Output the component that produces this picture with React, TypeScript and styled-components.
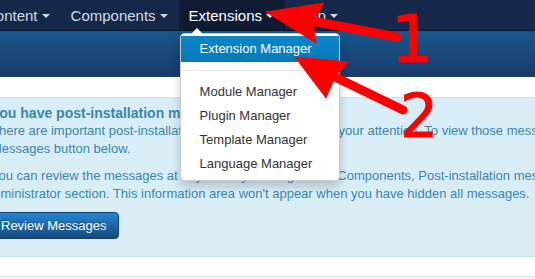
import React from "react";
import styled, { createGlobalStyle } from "styled-components";

const GlobalStyle = createGlobalStyle`
  html, body {
    margin: 0;
    padding: 0;
    background: #fff;
    overflow: hidden;
  }
  body {
    font-family: "Liberation Sans", Arial, sans-serif;
  }
`;

const Page = styled.div`
  position: relative;
  width: 535px;
  height: 279px;
  overflow: hidden;
  background: #fff;
`;

const Navbar = styled.nav`
  position: relative;
  z-index: 3;
  display: flex;
  height: 30px;
  background: #152849;
  border-bottom: 1px solid #0b1629;
`;

const Menu = styled.ul`
  display: flex;
  margin: 0 0 0 -25px;
  padding: 0;
  list-style: none;
`;

const NavItem = styled.li<{ $active?: boolean }>`
  position: relative;
  display: flex;
  align-items: center;
  gap: 4px;
  height: 30px;
  padding: 0 11px 0 10px;
  font-size: 15px;
  white-space: nowrap;
  color: ${(p) => (p.$active ? "#ffffff" : "#d3d8e1")};
  background: ${(p) => (p.$active ? "#0e1b33" : "transparent")};
`;

const Caret = styled.span`
  width: 0;
  height: 0;
  margin-top: 1px;
  border-top: 4px solid currentColor;
  border-left: 4px solid transparent;
  border-right: 4px solid transparent;
`;

const Dropdown = styled.ul`
  position: absolute;
  top: 33px;
  left: 1px;
  width: 158px;
  margin: 0;
  padding: 2px 0 4px;
  list-style: none;
  background: #fff;
  border: 1px solid rgba(0, 0, 0, 0.2);
  border-radius: 5px;
  box-shadow: 0 5px 10px rgba(0, 0, 0, 0.2);

  &::before {
    content: "";
    position: absolute;
    top: -7px;
    left: 9px;
    border-left: 7px solid transparent;
    border-right: 7px solid transparent;
    border-bottom: 7px solid rgba(0, 0, 0, 0.2);
  }
  &::after {
    content: "";
    position: absolute;
    top: -6px;
    left: 10px;
    border-left: 6px solid transparent;
    border-right: 6px solid transparent;
    border-bottom: 6px solid #fff;
  }
`;

const DropItem = styled.li<{ $active?: boolean }>`
  padding: 0 19px;
  font-size: 13px;
  line-height: ${(p) => (p.$active ? "26px" : "24px")};
  color: ${(p) => (p.$active ? "#fff" : "#333")};
  background: ${(p) =>
    p.$active ? "linear-gradient(#0b86c8, #0679b9)" : "transparent"};
`;

const Divider = styled.li`
  height: 1px;
  margin: 8px 1px 9px;
  background: #e5e5e5;
`;

const Header = styled.header`
  height: 46px;
  background: linear-gradient(#17578c, #1a3a6b);
`;

const Content = styled.main`
  padding-top: 20px;
`;

const Alert = styled.section`
  padding: 6px 0 17px;
  background: #d9edf7;
  border-top: 1px solid #bce8f1;
  border-bottom: 1px solid #bce8f1;
  color: #3a87ad;
  font-size: 13px;
  line-height: 18px;
`;

const AlertBody = styled.div`
  margin-left: -9px;
`;

const AlertTitle = styled.h4`
  margin: 0;
  font-size: 14px;
  font-weight: bold;
  line-height: 18px;
  white-space: nowrap;
`;

const Paragraph = styled.p`
  margin: 0 0 9px;
`;

const Line = styled.span<{ $hang?: number }>`
  display: block;
  white-space: nowrap;
  margin-left: ${(p) => (p.$hang ? `-${p.$hang}px` : "0")};
`;

const Button = styled.button`
  height: 27px;
  margin-left: -2px;
  padding: 0 11px 0 11px;
  font-family: inherit;
  font-size: 13px;
  color: #fff;
  text-shadow: 0 -1px 0 rgba(0, 0, 0, 0.25);
  background: linear-gradient(#2586d4, #15497d);
  border: 1px solid #143f6c;
  border-radius: 4px;
`;

const Footer = styled.div`
  height: 10px;
  margin-top: 19px;
  background: #f3f3f3;
  border-top: 1px solid #e1e1e1;
`;

const Annotations = styled.svg`
  position: absolute;
  top: 0;
  left: 0;
  z-index: 10;
  pointer-events: none;
`;

const Digit = styled.text`
  font-family: "DejaVu Sans", sans-serif;
  fill: #ff0000;
  stroke: #ff0000;
  stroke-width: 1px;
`;

const menu = ["Content", "Components", "Extensions", "Help"];
const extensionItems = [
  "Module Manager",
  "Plugin Manager",
  "Template Manager",
  "Language Manager",
];

export default function App() {
  return (
    <Page>
      <GlobalStyle />
      <Navbar>
        <Menu>
          {menu.map((label) => (
            <NavItem key={label} $active={label === "Extensions"}>
              {label}
              <Caret />
              {label === "Extensions" && (
                <Dropdown>
                  <DropItem $active>Extension Manager</DropItem>
                  <Divider />
                  {extensionItems.map((item) => (
                    <DropItem key={item}>{item}</DropItem>
                  ))}
                </Dropdown>
              )}
            </NavItem>
          ))}
        </Menu>
      </Navbar>
      <Header />
      <Content>
        <Alert>
          <AlertBody>
            <AlertTitle>You have post-installation messages</AlertTitle>
            <Paragraph>
              <Line>
                There are important post-installation messages that require
                &nbsp;your attention. To view those messages please click on
                the Review
              </Line>
              <Line>Messages button below.</Line>
            </Paragraph>
            <Paragraph>
              <Line>
                You can review the messages at any time by clicking on the
                Components, Post-installation messages menu item in your site's
              </Line>
              <Line $hang={5}>
                administrator section. This information area won't appear when
                you have hidden all messages.
              </Line>
            </Paragraph>
            <Button>Review Messages</Button>
          </AlertBody>
        </Alert>
        <Footer />
      </Content>
      <Annotations width="535" height="279" viewBox="0 0 535 279">
        <g fill="#ff0000" stroke="#ff0000">
          <line x1="312" y1="21" x2="397" y2="37" strokeWidth="9" strokeLinecap="round" />
          <polygon points="266,12 324,3 313,21 316,43" strokeWidth="1" strokeLinejoin="round" />
          <line x1="335" y1="77" x2="403" y2="110" strokeWidth="9" strokeLinecap="round" />
          <polygon points="295,57 348,62 335,77 326,98" strokeWidth="1" strokeLinejoin="round" />
        </g>
        <Digit x="391" y="62" fontSize="66">1</Digit>
        <Digit x="400" y="137" fontSize="60">2</Digit>
      </Annotations>
    </Page>
  );
}
